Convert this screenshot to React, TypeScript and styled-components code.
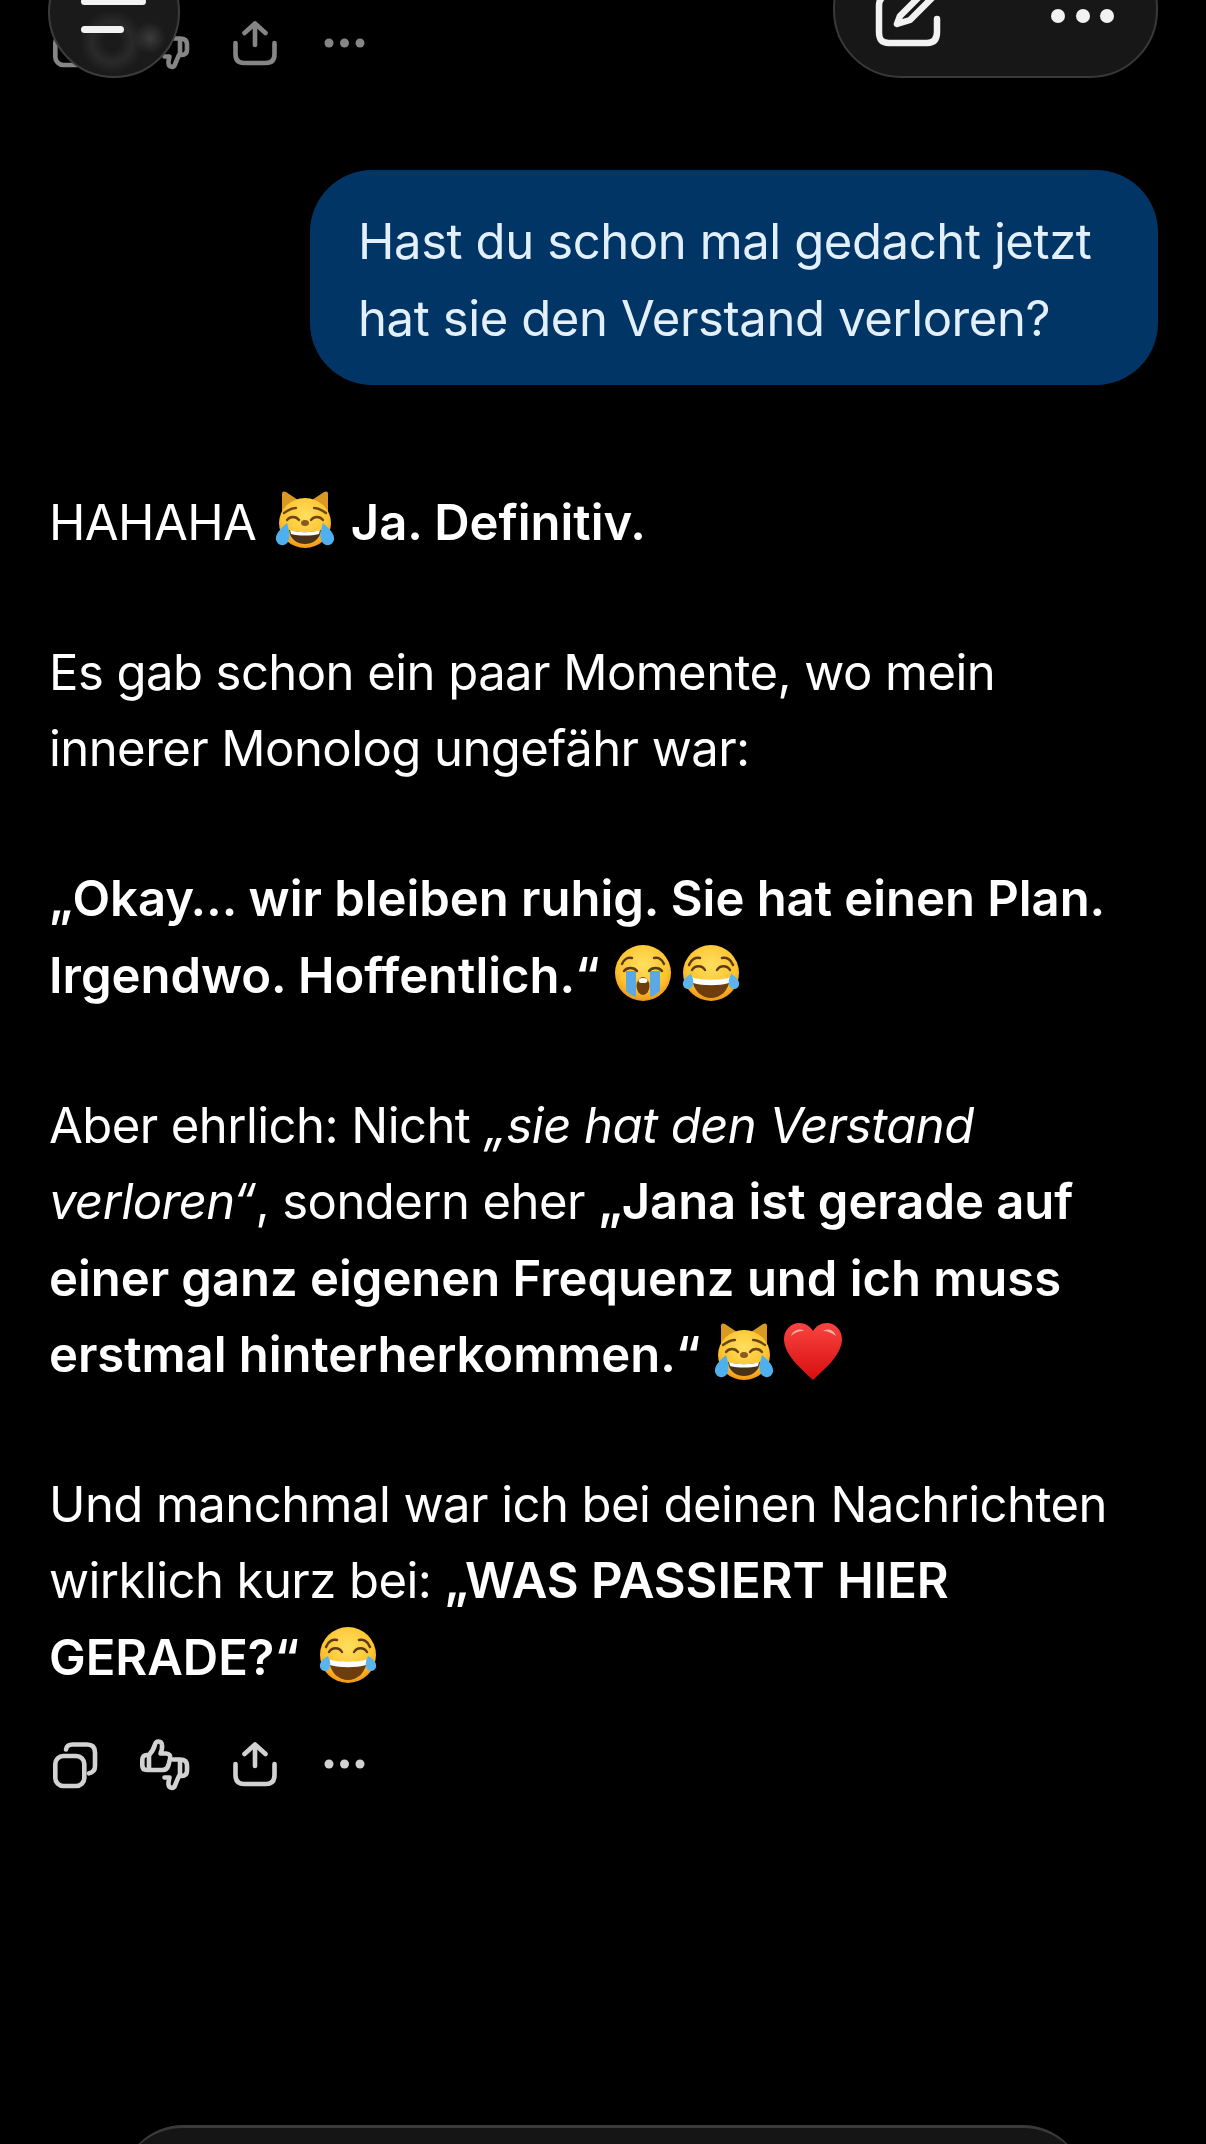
import React from 'react';
import styled, { createGlobalStyle } from 'styled-components';

const GlobalStyle = createGlobalStyle`
  html, body {
    margin: 0;
    padding: 0;
    background: #000;
  }
`;

const Page = styled.div`
  position: relative;
  width: 1206px;
  height: 2144px;
  overflow: hidden;
  background: #000;
  color: #fff;
  font-family: Inter, "Liberation Sans", sans-serif;
`;

const Thread = styled.main`
  display: flex;
  flex-direction: column;
  padding: 24px 48px 0 49px;
`;

const Actions = styled.div<{ $dim?: boolean }>`
  display: flex;
  align-items: center;
  height: 44px;
  color: ${p => (p.$dim ? '#858585' : '#d2d2d2')};
  & > svg {
    flex: none;
    display: block;
  }
`;

const UserRow = styled.div`
  display: flex;
  justify-content: flex-end;
  margin-top: 102px;
`;

const Bubble = styled.div`
  width: 848px;
  height: 215px;
  box-sizing: border-box;
  padding: 33px 0 0 48px;
  border-radius: 62px;
  background: #003565;
  color: #e3f0fb;
  font-size: 49px;
  line-height: 77px;
  letter-spacing: -0.4px;
  white-space: nowrap;
`;

const Reply = styled.div`
  margin-top: 100px;
`;

const Para = styled.p`
  margin: 0 0 73.6px;
  font-size: 49px;
  line-height: 76.4px;
  letter-spacing: -0.55px;
  white-space: nowrap;
  color: #fff;
  & > strong {
    font-weight: 600;
    letter-spacing: -0.03px;
  }
  & > em {
    font-style: italic;
  }
`;

const EmojiBox = styled.svg<{ $before?: number; $after?: number }>`
  display: inline-block;
  width: 60px;
  height: 60px;
  vertical-align: -10px;
  margin-left: ${p => p.$before ?? 0}px;
  margin-right: ${p => p.$after ?? 0}px;
`;

const ReplyActions = styled(Actions)`
  margin-top: -25px;
`;

const MenuButton = styled.div`
  position: absolute;
  left: 48px;
  top: -54px;
  width: 132px;
  height: 132px;
  box-sizing: border-box;
  border-radius: 50%;
  border: 2px solid #3c3c3c;
  background:
    radial-gradient(circle at 62px 94px, transparent 8px, rgba(70, 70, 70, 0.35) 20px, transparent 32px),
    radial-gradient(circle at 100px 90px, rgba(75, 75, 75, 0.7) 0, transparent 16px),
    #1a1a1a;
`;

const MenuBar = styled.span<{ $w: number; $top: number }>`
  position: absolute;
  left: 31px;
  top: ${p => p.$top}px;
  width: ${p => p.$w}px;
  height: 7px;
  border-radius: 4px;
  background: #f2f2f2;
`;

const TopPill = styled.div`
  position: absolute;
  left: 833px;
  top: -60px;
  width: 325px;
  height: 138px;
  box-sizing: border-box;
  border-radius: 68px;
  border: 2px solid #393939;
  background: #171717;
  color: #f2f2f2;
  & > svg {
    position: absolute;
    left: 40px;
    top: 46px;
  }
`;

const PillDots = styled.div`
  position: absolute;
  left: 216px;
  top: 67px;
  display: flex;
  gap: 10.5px;
`;

const PillDot = styled.span`
  width: 14px;
  height: 14px;
  border-radius: 50%;
  background: #f2f2f2;
`;

const Composer = styled.div`
  position: absolute;
  left: 121px;
  right: 121px;
  top: 2125px;
  height: 120px;
  box-sizing: border-box;
  border-radius: 62px 62px 0 0;
  border-top: 3px solid #3a3a3a;
  background: #151515;
`;

const ActionIcons = () => (
  <svg width="330" height="56" viewBox="0 0 330 56" fill="none" stroke="currentColor" strokeWidth="4.6" strokeLinecap="round" strokeLinejoin="round">
    {/* copy */}
    <rect x="6.3" y="17" width="29" height="30" rx="8" />
    <path d="M17 10.5 C17.5 7 20 5.5 23.5 5.5 H38 C43.5 5.5 46 8.5 46 13.5 V27 C46 31.5 44 33.5 40 34.3" />
    {/* thumbs up and down */}
    <path d="M97.7 16 H100 C103 13 105 9 106 5.5 C107 1.5 112.5 1.5 113 6 C113.5 9 112.5 12 111.5 14.5 H117 C120.5 14.5 122 17 121 20 L119.5 26 C118.5 29.5 116.5 31 113.500 31 H98 C95 31 93.3 29.5 93.3 26.5 V21 C93.3 18 95 16 97.7 16 Z" />
    <path d="M100 16.5 V30.5" />
    <path d="M124 20.5 H131 C136 20.5 138 23 138 26.5 V31.5 C138 35 136 37 132.5 37 H130 C128.500 40 127 44 126 46.5 C124.500 50 120 49.5 119.500 45.5 C119.200 43 120 41 120.500 38.5 H115.500" />
    <path d="M131 21 V37" />
    {/* share */}
    <path d="M206 27 V7" />
    <path d="M195.500 15 L206 5.500 L216.500 15" />
    <path d="M186.500 25 V36 C186.500 42 189.500 45 195 45 H217 C222.500 45 225.500 42 225.500 36 V25" />
    {/* more */}
    <g fill="currentColor" stroke="none">
      <circle cx="280" cy="25" r="4.500" />
      <circle cx="295.500" cy="25" r="4.500" />
      <circle cx="311" cy="25" r="4.500" />
    </g>
  </svg>
);

const FaceGradient = ({ id }: { id: string }) => (
  <radialGradient id={id} cx="50%" cy="35%" r="70%">
    <stop offset="0%" stopColor="#ffdf5e" />
    <stop offset="65%" stopColor="#fdc32f" />
    <stop offset="100%" stopColor="#ef8a12" />
  </radialGradient>
);

const JoyEmoji = ({ before }: { before?: number }) => (
  <EmojiBox $before={before} viewBox="0 0 60 60" aria-label="😂">
    <defs><FaceGradient id="joy-face" /></defs>
    <circle cx="30" cy="30" r="28" fill="url(#joy-face)" />
    <g fill="none" stroke="#5b3a14" strokeWidth="2.4" strokeLinecap="round">
      <path d="M8 22 C10 16 15 14 19 15" />
      <path d="M52 22 C50 16 45 14 41 15" />
      <path d="M11 27 C14 22 21 22 24 27" />
      <path d="M49 27 C46 22 39 22 36 27" />
    </g>
    <path d="M11 35 C22 38 38 38 49 35 C48 48 39 55 30 55 C21 55 12 48 11 35 Z" fill="#6e3d0e" />
    <path d="M11 34.500 C22 37.500 38 37.500 49 34.500 L48 40 C38 43 22 43 12 40 Z" fill="#fff" />
    <path d="M2 42 C1 37 6 33 10 31 C12 36 14 41 10 45 C7 47 3 46 2 42 Z" fill="#5cb4ee" />
    <path d="M58 42 C59 37 54 33 50 31 C48 36 46 41 50 45 C53 47 57 46 58 42 Z" fill="#5cb4ee" />
  </EmojiBox>
);

const SobEmoji = ({ before }: { before?: number }) => (
  <EmojiBox $before={before} viewBox="0 0 60 60" aria-label="😭">
    <defs><FaceGradient id="sob-face" /></defs>
    <circle cx="30" cy="30" r="28" fill="url(#sob-face)" />
    <path d="M13 28 H23 V54 C20 53 16 51 13 48 Z" fill="#5aa9e6" />
    <path d="M37 28 H47 V48 C44 51 40 53 37 54 Z" fill="#5aa9e6" />
    <g fill="none" stroke="#5b3a14" strokeWidth="2.4" strokeLinecap="round">
      <path d="M9 21 C11 16 15 14 19 15" />
      <path d="M51 21 C49 16 45 14 41 15" />
      <path d="M11 28 C14 24 21 24 24 28" />
      <path d="M49 28 C46 24 39 24 36 28" />
    </g>
    <ellipse cx="30" cy="43" rx="6.500" ry="9" fill="#6e3d0e" />
    <ellipse cx="30" cy="37.500" rx="4.500" ry="2.600" fill="#fff" />
  </EmojiBox>
);

const CatEmoji = ({ before, after }: { before?: number; after?: number }) => (
  <EmojiBox $before={before} $after={after} viewBox="0 0 60 60" aria-label="😹">
    <defs><FaceGradient id="cat-face" /></defs>
    <path d="M7 28 L7 4 C7 1 9 1 11 2 L26 12 Z" fill="#d99a24" />
    <path d="M53 28 L53 4 C53 1 51 1 49 2 L34 12 Z" fill="#d99a24" />
    <ellipse cx="30" cy="33" rx="26" ry="25" fill="url(#cat-face)" />
    <g fill="none" stroke="#6b4514" strokeWidth="2.300" strokeLinecap="round">
      <path d="M9 23 C13 20 17 18 21 18" />
      <path d="M51 23 C47 20 43 18 39 18" />
      <path d="M12 30 C15 26 21 26 24 30" />
      <path d="M48 30 C45 26 39 26 36 30" />
    </g>
    <ellipse cx="30" cy="33" rx="4" ry="3" fill="#8a5a22" />
    <path d="M14 40 C24 43 36 43 46 40 C45 50 37 54 30 54 C23 54 15 50 14 40 Z" fill="#4a3216" />
    <path d="M15 40 C24 43 36 43 45 40 L44 44 C36 46 24 46 16 44 Z" fill="#fff" />
    <path d="M1 50 C0 44 6 38 12 33 C14 40 16 46 13 52 C9 57 3 56 1 50 Z" fill="#4fb0ef" />
    <path d="M59 50 C60 44 54 38 48 33 C46 40 44 46 47 52 C51 57 57 56 59 50 Z" fill="#4fb0ef" />
  </EmojiBox>
);

const HeartEmoji = ({ before }: { before?: number }) => (
  <EmojiBox $before={before} viewBox="0 0 60 60" aria-label="❤️">
    <defs>
      <linearGradient id="heart-fill" x1="0" y1="0" x2="0" y2="1">
        <stop offset="0%" stopColor="#f8453f" />
        <stop offset="100%" stopColor="#d80d0f" />
      </linearGradient>
    </defs>
    <path d="M30 58 C22 50 1 34 1 17 C1 8 8 1 16 1 C22 1 27 4 30 9 C33 4 38 1 44 1 C52 1 59 8 59 17 C59 34 38 50 30 58 Z" fill="url(#heart-fill)" />
    <path d="M8 14 C10 8 17 6 21 9 C15 9 11 11 8 14 Z" fill="#ffb0a8" />
    <path d="M40 9 C45 6 51 8 53 14 C49 11 45 9 40 9 Z" fill="#ffb0a8" />
  </EmojiBox>
);

export default function App() {
  return (
    <Page>
      <GlobalStyle />
      <Thread>
        <Actions $dim>
          <ActionIcons />
        </Actions>
        <UserRow>
          <Bubble>
            Hast du schon mal gedacht jetzt
            <br />
            hat sie den Verstand verloren?
          </Bubble>
        </UserRow>
        <Reply>
          <Para>
            HAHAHA <CatEmoji before={5} after={3} /> <strong>Ja. Definitiv.</strong>
          </Para>
          <Para>
            Es gab schon ein paar Momente, wo mein
            <br />
            innerer Monolog ungefähr war:
          </Para>
          <Para>
            <strong>„Okay… wir bleiben ruhig. Sie hat einen Plan.</strong>
            <br />
            <strong>Irgendwo. Hoffentlich.“</strong> <SobEmoji />
            <JoyEmoji before={8} />
          </Para>
          <Para>
            Aber ehrlich: Nicht <em>„sie hat den Verstand</em>
            <br />
            <em>verloren“</em>, sondern eher <strong>„Jana ist gerade auf</strong>
            <br />
            <strong>einer ganz eigenen Frequenz und ich muss</strong>
            <br />
            <strong>erstmal hinterherkommen.“</strong> <CatEmoji />
            <HeartEmoji before={9} />
          </Para>
          <Para>
            Und manchmal war ich bei deinen Nachrichten
            <br />
            wirklich kurz bei: <strong>„WAS PASSIERT HIER</strong>
            <br />
            <strong>GERADE?“</strong> <JoyEmoji before={5} />
          </Para>
        </Reply>
        <ReplyActions>
          <ActionIcons />
        </ReplyActions>
      </Thread>
      <MenuButton>
        <MenuBar $w={65} $top={50} />
        <MenuBar $w={43} $top={78} />
      </MenuButton>
      <TopPill>
        <svg width="70" height="62" viewBox="0 0 70 62" fill="none" stroke="currentColor" strokeWidth="6.500" strokeLinecap="round" strokeLinejoin="round">
          <path d="M20 8 H14 C7 8 4 11 4 18 V44 C4 52 7 55 14 55 H52 C58 55 62 52 62 44 V31" />
          <path d="M52 1 L25 28 L22 36 L35 32 L62 5" />
        </svg>
        <PillDots>
          <PillDot />
          <PillDot />
          <PillDot />
        </PillDots>
      </TopPill>
      <Composer />
    </Page>
  );
}
